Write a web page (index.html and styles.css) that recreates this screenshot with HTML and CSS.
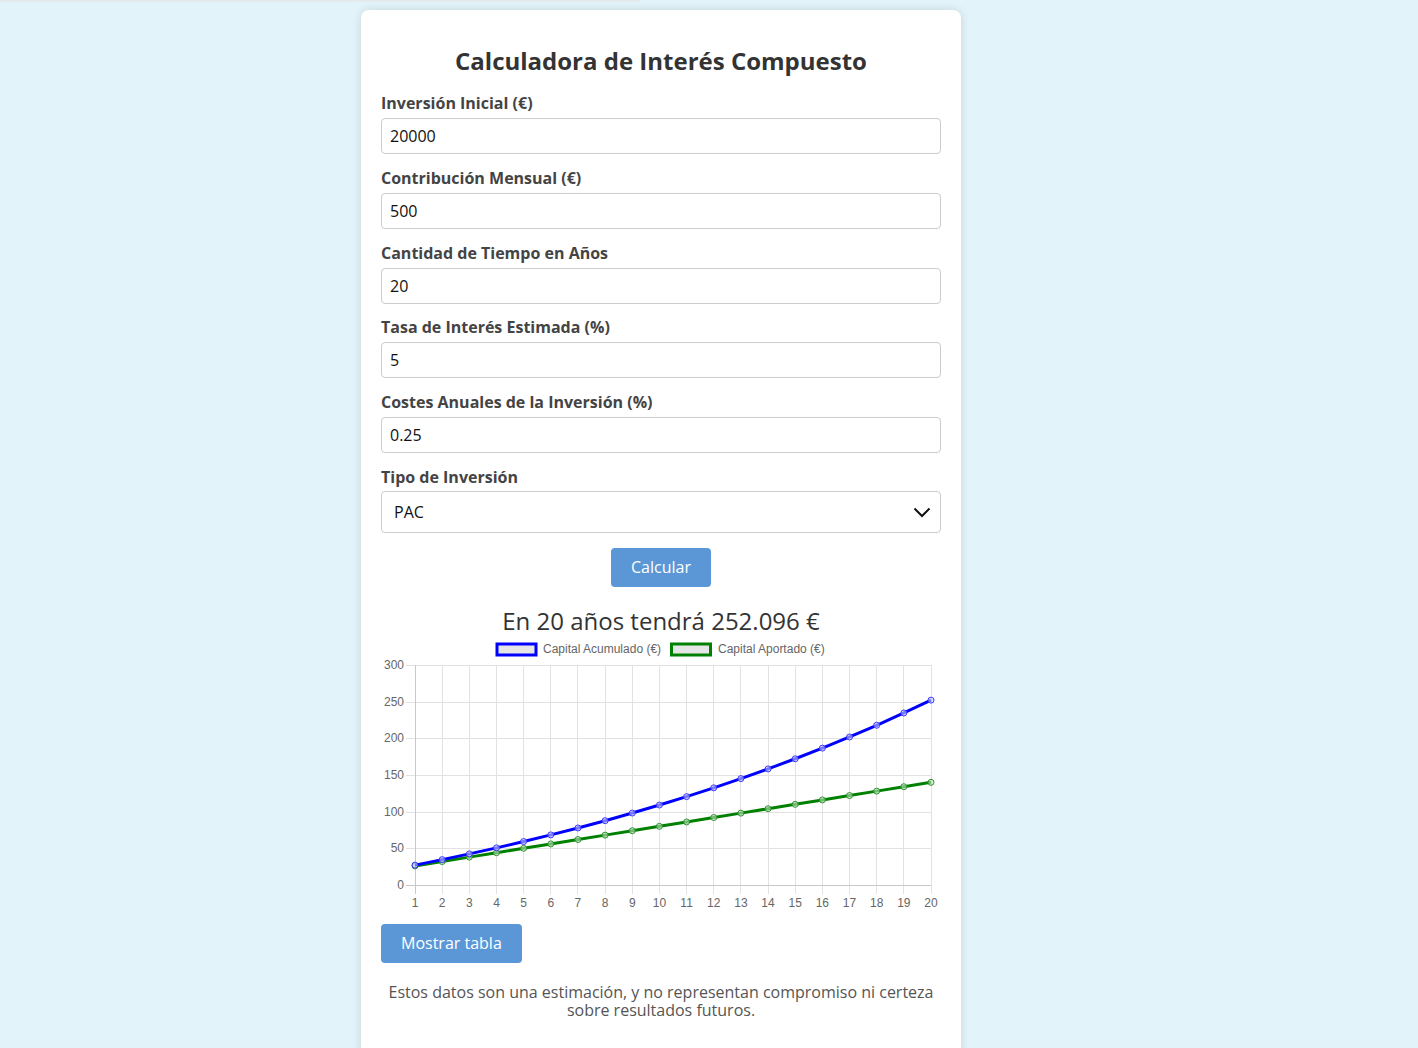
FILE: index.html
```html
<!DOCTYPE html>
<html lang="es">
<head>
<meta charset="utf-8">
<title>Calculadora de Interés Compuesto</title>
<link rel="stylesheet" href="styles.css">
</head>
<body>
<div class="topline"></div>
<main class="card">
  <h2 class="title">Calculadora de Interés Compuesto</h2>
  <form class="form">
    <label class="field-label" for="inicial">Inversión Inicial (€)</label>
    <input class="field" id="inicial" type="text" value="20000">
    <label class="field-label" for="mensual">Contribución Mensual (€)</label>
    <input class="field" id="mensual" type="text" value="500">
    <label class="field-label" for="anios">Cantidad de Tiempo en Años</label>
    <input class="field" id="anios" type="text" value="20">
    <label class="field-label" for="tasa">Tasa de Interés Estimada (%)</label>
    <input class="field" id="tasa" type="text" value="5">
    <label class="field-label" for="costes">Costes Anuales de la Inversión (%)</label>
    <input class="field" id="costes" type="text" value="0.25">
    <label class="field-label field-label-select" for="tipo">Tipo de Inversión</label>
    <div class="select-wrap">
      <div class="select" id="tipo">PAC</div>
      <svg class="chevron" width="18" height="11" viewBox="0 0 18 11"><path d="M1.5 1.5 L9 9 L16.5 1.5" fill="none" stroke="#111" stroke-width="2"/></svg>
    </div>
    <div class="actions"><button class="btn" type="button">Calcular</button></div>
  </form>

  <p class="result">En 20 años tendrá 252.096 €</p>

  <svg class="chart" width="560" height="276" viewBox="0 0 560 276">
    <g class="legend">
      <rect x="116" y="6" width="39" height="11" fill="#e6e6e6" stroke="#0000ff" stroke-width="3"/>
      <text x="162" y="15">Capital Acumulado (€)</text>
      <rect x="290.5" y="6" width="39" height="11" fill="#e6e6e6" stroke="#008000" stroke-width="3"/>
      <text x="337" y="15">Capital Aportado (€)</text>
    </g>
    <g class="grid" stroke="#e2e2e2" stroke-width="1" shape-rendering="crispEdges">
      <line x1="25" y1="27.5" x2="550" y2="27.5"/>
      <line x1="25" y1="64.5" x2="550" y2="64.5"/>
      <line x1="25" y1="100.5" x2="550" y2="100.5"/>
      <line x1="25" y1="137.5" x2="550" y2="137.5"/>
      <line x1="25" y1="174.5" x2="550" y2="174.5"/>
      <line x1="25" y1="210.5" x2="550" y2="210.5"/>
      <line x1="61.16" y1="27" x2="61.16" y2="256"/>
      <line x1="88.32" y1="27" x2="88.32" y2="256"/>
      <line x1="115.47" y1="27" x2="115.47" y2="256"/>
      <line x1="142.63" y1="27" x2="142.63" y2="256"/>
      <line x1="169.79" y1="27" x2="169.79" y2="256"/>
      <line x1="196.95" y1="27" x2="196.95" y2="256"/>
      <line x1="224.11" y1="27" x2="224.11" y2="256"/>
      <line x1="251.26" y1="27" x2="251.26" y2="256"/>
      <line x1="278.42" y1="27" x2="278.42" y2="256"/>
      <line x1="305.58" y1="27" x2="305.58" y2="256"/>
      <line x1="332.74" y1="27" x2="332.74" y2="256"/>
      <line x1="359.89" y1="27" x2="359.89" y2="256"/>
      <line x1="387.05" y1="27" x2="387.05" y2="256"/>
      <line x1="414.21" y1="27" x2="414.21" y2="256"/>
      <line x1="441.37" y1="27" x2="441.37" y2="256"/>
      <line x1="468.53" y1="27" x2="468.53" y2="256"/>
      <line x1="495.68" y1="27" x2="495.68" y2="256"/>
      <line x1="522.84" y1="27" x2="522.84" y2="256"/>
      <line x1="550" y1="27" x2="550" y2="256"/>
    </g>
    <g stroke="#c8c8c8" stroke-width="1" shape-rendering="crispEdges">
      <line x1="34.5" y1="27" x2="34.5" y2="256"/>
      <line x1="25" y1="247.5" x2="550" y2="247.5"/>
    </g>
    <g class="ylabels" text-anchor="end">
      <text x="23" y="31">300</text>
      <text x="23" y="68">250</text>
      <text x="23" y="104">200</text>
      <text x="23" y="141">150</text>
      <text x="23" y="178">100</text>
      <text x="23" y="214">50</text>
      <text x="23" y="251">0</text>
    </g>
    <g class="xlabels" text-anchor="middle">
      <text x="34" y="269">1</text>
      <text x="61.16" y="269">2</text>
      <text x="88.32" y="269">3</text>
      <text x="115.47" y="269">4</text>
      <text x="142.63" y="269">5</text>
      <text x="169.79" y="269">6</text>
      <text x="196.95" y="269">7</text>
      <text x="224.11" y="269">8</text>
      <text x="251.26" y="269">9</text>
      <text x="278.42" y="269">10</text>
      <text x="305.58" y="269">11</text>
      <text x="332.74" y="269">12</text>
      <text x="359.89" y="269">13</text>
      <text x="387.05" y="269">14</text>
      <text x="414.21" y="269">15</text>
      <text x="441.37" y="269">16</text>
      <text x="468.53" y="269">17</text>
      <text x="495.68" y="269">18</text>
      <text x="522.84" y="269">19</text>
      <text x="550" y="269">20</text>
    </g>
    <polyline class="line-green" points="34,227.93 61.16,223.53 88.32,219.13 115.47,214.73 142.63,210.33 169.79,205.93 196.95,201.53 224.11,197.13 251.26,192.73 278.42,188.33 305.58,183.93 332.74,179.53 359.89,175.13 387.05,170.73 414.21,166.33 441.37,161.93 468.53,157.53 495.68,153.13 522.84,148.73 550,144.33"/>
    <g class="pts-green">
      <circle cx="34" cy="227.93" r="3"/><circle cx="61.16" cy="223.53" r="3"/><circle cx="88.32" cy="219.13" r="3"/><circle cx="115.47" cy="214.73" r="3"/><circle cx="142.63" cy="210.33" r="3"/><circle cx="169.79" cy="205.93" r="3"/><circle cx="196.95" cy="201.53" r="3"/><circle cx="224.11" cy="197.13" r="3"/><circle cx="251.26" cy="192.73" r="3"/><circle cx="278.42" cy="188.33" r="3"/><circle cx="305.58" cy="183.93" r="3"/><circle cx="332.74" cy="179.53" r="3"/><circle cx="359.89" cy="175.13" r="3"/><circle cx="387.05" cy="170.73" r="3"/><circle cx="414.21" cy="166.33" r="3"/><circle cx="441.37" cy="161.93" r="3"/><circle cx="468.53" cy="157.53" r="3"/><circle cx="495.68" cy="153.13" r="3"/><circle cx="522.84" cy="148.73" r="3"/><circle cx="550" cy="144.33" r="3"/>
    </g>
    <polyline class="line-blue" points="34,227.11 61.16,221.63 88.32,215.88 115.47,209.85 142.63,203.53 169.79,196.91 196.95,189.96 224.11,182.68 251.26,175.04 278.42,167.03 305.58,158.64 332.74,149.83 359.89,140.60 387.05,130.92 414.21,120.77 441.37,110.12 468.53,98.97 495.68,87.26 522.84,74.99 550,62.13"/>
    <g class="pts-blue">
      <circle cx="34" cy="227.11" r="3"/><circle cx="61.16" cy="221.63" r="3"/><circle cx="88.32" cy="215.88" r="3"/><circle cx="115.47" cy="209.85" r="3"/><circle cx="142.63" cy="203.53" r="3"/><circle cx="169.79" cy="196.91" r="3"/><circle cx="196.95" cy="189.96" r="3"/><circle cx="224.11" cy="182.68" r="3"/><circle cx="251.26" cy="175.04" r="3"/><circle cx="278.42" cy="167.03" r="3"/><circle cx="305.58" cy="158.64" r="3"/><circle cx="332.74" cy="149.83" r="3"/><circle cx="359.89" cy="140.60" r="3"/><circle cx="387.05" cy="130.92" r="3"/><circle cx="414.21" cy="120.77" r="3"/><circle cx="441.37" cy="110.12" r="3"/><circle cx="468.53" cy="98.97" r="3"/><circle cx="495.68" cy="87.26" r="3"/><circle cx="522.84" cy="74.99" r="3"/><circle cx="550" cy="62.13" r="3"/>
    </g>
  </svg>

  <div class="table-actions"><button class="btn" type="button">Mostrar tabla</button></div>

  <p class="disclaimer">Estos datos son una estimación, y no representan compromiso ni certeza sobre resultados futuros.</p>
</main>
</body>
</html>
```
FILE: styles.css
```css
* { box-sizing: border-box; }

html, body {
  margin: 0;
  padding: 0;
  background: #e2f4f9;
  font-family: "Open Sans", "Noto Sans", sans-serif;
  color: #333;
  overflow: hidden;
}

.topline {
  width: 640px;
  height: 2px;
  background: #e4eaec;
}

.card {
  width: 600px;
  margin: 8px 0 0 361px;
  background: #fff;
  border-radius: 8px;
  box-shadow: 0 0 10px rgba(0, 0, 0, 0.12);
  padding: 20px 20px 40px;
}

.title {
  margin: 15px 0 15px;
  font-size: 24px;
  line-height: 32px;
  font-weight: 700;
  text-align: center;
  color: #333;
}

.form {
  display: flex;
  flex-direction: column;
}

.field-label {
  display: block;
  font-size: 16px;
  line-height: 22px;
  font-weight: 700;
  color: #444;
  margin-bottom: 4px;
}

.field-label-select {
  margin-bottom: 3px;
}

.field {
  display: block;
  width: 100%;
  height: 36px;
  margin: 0 0 12.8px;
  padding: 0 8px;
  border: 1px solid #ccc;
  border-radius: 4px;
  font-family: inherit;
  font-size: 16px;
  color: #111;
  background: #fff;
}

.select-wrap {
  position: relative;
  height: 42px;
}

.select {
  height: 42px;
  border: 1px solid #ccc;
  border-radius: 4px;
  padding: 0 12px;
  font-size: 16px;
  line-height: 40px;
  color: #111;
}

.chevron {
  position: absolute;
  right: 10px;
  top: 16px;
}

.actions {
  display: flex;
  justify-content: center;
  margin-top: 15px;
}

.btn {
  font-family: inherit;
  font-size: 16px;
  line-height: 23px;
  padding: 8px 20px;
  border: none;
  border-radius: 4px;
  background: #5b97d6;
  color: #fff;
  cursor: pointer;
}

.result {
  margin: 17px 0 0;
  font-size: 24px;
  line-height: 34px;
  text-align: center;
  color: #333;
}

.chart {
  display: block;
  margin-top: 0;
  font-family: "Liberation Sans", Arial, sans-serif;
  font-size: 12px;
}

.chart text {
  fill: #666;
}

.line-blue, .line-green {
  fill: none;
  stroke-width: 3;
  stroke-linejoin: round;
}

.line-blue { stroke: #0000ff; }
.line-green { stroke: #008000; }

.pts-blue circle {
  fill: rgba(200, 200, 255, 0.6);
  stroke: #3a3aff;
  stroke-width: 1;
}

.pts-green circle {
  fill: rgba(190, 225, 190, 0.6);
  stroke: #2e922e;
  stroke-width: 1;
}

.table-actions {
  margin-top: 10px;
}

.disclaimer {
  margin: 20px 0 0;
  font-size: 16px;
  line-height: 18px;
  text-align: center;
  color: #555;
}
```
